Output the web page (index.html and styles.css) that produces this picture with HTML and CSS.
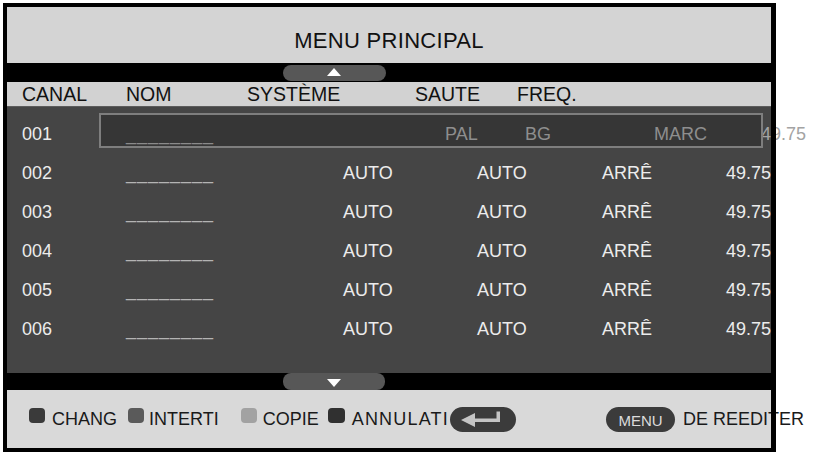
FILE: index.html
```html
<!DOCTYPE html>
<html lang="fr">
<head>
<meta charset="utf-8">
<title>MENU PRINCIPAL</title>
<link rel="stylesheet" href="styles.css">
</head>
<body>
<div class="frame">
  <div class="title">MENU PRINCIPAL</div>
  <div class="band band-top">
    <div class="pill pill-top">
      <svg width="103" height="16" viewBox="0 0 103 16"><polygon points="51,3 58,11 44,11" fill="#ffffff"/></svg>
    </div>
  </div>
  <div class="head">
    <span class="h-canal">CANAL</span><span class="h-nom">NOM</span><span class="h-sys">SYSTÈME</span><span class="h-saute">SAUTE</span><span>FREQ.</span>
  </div>
  <div class="list">
    <div class="row row-sel">
      <span class="num num-sel">001</span>
      <div class="selbox">
        <span class="s-name">________</span><span class="s-pal">PAL</span><span class="s-bg">BG</span><span>MARC</span>
      </div>
      <span class="s-freq">49.75</span>
    </div>
    <div class="row">
      <span class="num">002</span><span class="name">________</span><span class="c-sys">AUTO</span><span class="c-saute">AUTO</span><span class="c-arr">ARRÊ</span><span class="freq">49.75</span>
    </div>
    <div class="row">
      <span class="num">003</span><span class="name">________</span><span class="c-sys">AUTO</span><span class="c-saute">AUTO</span><span class="c-arr">ARRÊ</span><span class="freq">49.75</span>
    </div>
    <div class="row">
      <span class="num">004</span><span class="name">________</span><span class="c-sys">AUTO</span><span class="c-saute">AUTO</span><span class="c-arr">ARRÊ</span><span class="freq">49.75</span>
    </div>
    <div class="row">
      <span class="num">005</span><span class="name">________</span><span class="c-sys">AUTO</span><span class="c-saute">AUTO</span><span class="c-arr">ARRÊ</span><span class="freq">49.75</span>
    </div>
    <div class="row">
      <span class="num">006</span><span class="name">________</span><span class="c-sys">AUTO</span><span class="c-saute">AUTO</span><span class="c-arr">ARRÊ</span><span class="freq">49.75</span>
    </div>
  </div>
  <div class="band band-bot">
    <div class="pill pill-bot">
      <svg width="102" height="17" viewBox="0 0 102 17"><polygon points="44,6 58,6 51,14" fill="#ffffff"/></svg>
    </div>
  </div>
  <div class="foot">
    <span class="key key-1"></span><span class="lbl lbl-1">CHANG</span>
    <span class="key key-2"></span><span class="lbl lbl-2">INTERTI</span>
    <span class="key key-3"></span><span class="lbl lbl-3">COPIE</span>
    <span class="key key-4"></span><span class="lbl lbl-4">ANNULATI</span>
    <span class="btn btn-enter">
      <svg width="66" height="25" viewBox="0 0 66 25">
        <polygon points="11,13 25,6 25,20" fill="#c4c4c4"/>
        <rect x="24" y="11.5" width="26" height="3.5" fill="#c4c4c4"/>
        <rect x="46.5" y="4.5" width="3.5" height="10.5" fill="#c4c4c4"/>
      </svg>
    </span>
    <span class="btn btn-menu">MENU</span>
    <span class="lbl lbl-5">DE REEDITER</span>
  </div>
</div>
</body>
</html>
```
FILE: styles.css
```css
html, body {
  margin: 0;
  padding: 0;
  background: #ffffff;
}

body {
  font-family: "Liberation Sans", Arial, sans-serif;
  width: 816px;
  height: 456px;
  overflow: hidden;
}

.frame {
  position: relative;
  box-sizing: border-box;
  width: 773px;
  height: 449px;
  margin: 3px 0 0 3px;
  padding: 4px 5px 4px 4px;
  display: flex;
  flex-direction: column;
}

.frame::after {
  content: "";
  position: absolute;
  inset: 0;
  border-style: solid;
  border-color: #000;
  border-width: 4px 5px 4px 4px;
  pointer-events: none;
  z-index: 5;
}

.frame > * { flex-shrink: 0; }
.row > *, .selbox > *, .foot > *, .head > * { flex-shrink: 0; }

.title {
  height: 56px;
  box-sizing: border-box;
  padding-top: 11px;
  line-height: 45px;
  background: #d4d4d4;
  color: #111;
  font-size: 22px;
  letter-spacing: 0.3px;
  text-align: center;
}

.band {
  background: #000;
  display: flex;
  align-items: center;
  padding-left: 276px;
}

.band-top { height: 19px; }
.band-bot { height: 17px; }

.pill {
  background: #575757;
  display: flex;
}

.pill-top {
  width: 103px;
  height: 16px;
  border-radius: 8px;
}

.pill-bot {
  width: 102px;
  height: 17px;
  border-radius: 8px;
}

.head {
  height: 24px;
  line-height: 24px;
  background: #d2d2d2;
  color: #111;
  font-size: 19.5px;
  display: flex;
  padding-left: 15px;
}

.h-canal { width: 104px; }
.h-nom { width: 121px; }
.h-sys { width: 168px; }
.h-saute { width: 102px; }

.list {
  height: 267px;
  box-sizing: border-box;
  padding-top: 8px;
  background: #454545;
  border-top: 1px solid #5c5c5c;
}

.row {
  display: flex;
  align-items: flex-start;
  height: 39px;
  line-height: 39px;
  padding-left: 15px;
  color: #ececec;
  font-size: 18px;
  white-space: nowrap;
}

.num { width: 104px; }
.name {
  width: 217px;
  color: #b4b4b4;
  letter-spacing: 1px;
}
.c-sys { width: 134px; }
.c-saute { width: 125px; }
.c-arr { flex: 1 0 auto; }
.freq { text-align: right; }

.num-sel { width: 77px; }

.selbox {
  position: relative;
  z-index: 1;
  box-sizing: border-box;
  width: 664px;
  height: 35px;
  margin-top: -2px;
  padding: 8px 0 0 25px;
  line-height: 23px;
  border: 2px solid #7e7e7e;
  background: #363636;
  color: #8e8e8e;
  display: flex;
}

.s-name {
  width: 319px;
  letter-spacing: 1px;
  color: #8a8a8a;
}
.s-pal { width: 80px; }
.s-bg { width: 129px; }

.s-freq {
  margin-left: -2px;
  color: #a3a3a3;
}

.foot {
  height: 58px;
  background: #d9d9d9;
  display: flex;
  align-items: center;
  padding-left: 22px;
  color: #1a1a1a;
  font-size: 18px;
  white-space: nowrap;
}

.key {
  width: 16px;
  height: 15px;
  border-radius: 4px;
  margin-bottom: 7px;
}

.key-1 { background: #3a3a3a; }
.key-2 { background: #5a5a5a; margin-left: 11px; }
.key-3 { background: #a2a2a2; margin-left: 22px; }
.key-4 { background: #303030; margin-left: 9px; width: 17px; }

.lbl { line-height: 20px; }
.lbl-1 { margin-left: 7px; }
.lbl-2 { margin-left: 5px; }
.lbl-3 { margin-left: 6px; }
.lbl-4 { margin-left: 7px; letter-spacing: 1.2px; }
.lbl-5 { margin-left: 8px; }

.btn {
  height: 25px;
  border-radius: 12.5px;
  background: #3b3b3b;
  display: flex;
  align-items: center;
  justify-content: center;
}

.btn-enter {
  width: 66px;
  margin-left: 1px;
}

.btn-menu {
  width: 69px;
  margin-left: 90px;
  color: #dcdcdc;
  font-size: 15px;
  padding-top: 3px;
  box-sizing: border-box;
}
```
